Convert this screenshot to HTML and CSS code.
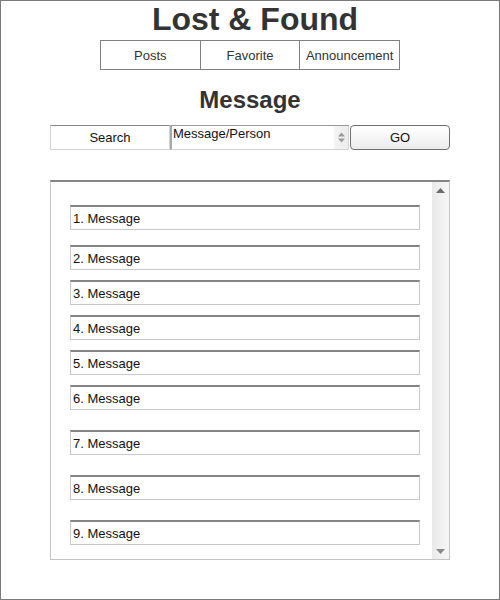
FILE: index.html
```html
<!DOCTYPE html>
<html>
<head>
<meta charset="utf-8">
<title>Lost &amp; Found</title>
<link rel="stylesheet" href="styles.css">
</head>
<body>
<div class="page">
  <h1 class="title">Lost &amp; Found</h1>
  <nav class="tabs">
    <a class="tab">Posts</a>
    <a class="tab">Favorite</a>
    <a class="tab">Announcement</a>
  </nav>
  <h2 class="heading">Message</h2>
  <div class="search-row">
    <div class="search-label">Search</div>
    <div class="select">
      <span class="select-text">Message/Person</span>
      <span class="select-arrows">
        <svg width="9" height="11" viewBox="0 0 9 11"><path d="M4.5 0.5 L8 4.5 L1 4.5 Z M1 6.5 L8 6.5 L4.5 10.5 Z" fill="#9a9a9a"/></svg>
      </span>
    </div>
    <div class="go">GO</div>
  </div>
  <div class="listbox">
    <div class="list">
      <div class="item">1. Message</div>
      <div class="item gap-l">2. Message</div>
      <div class="item gap-s">3. Message</div>
      <div class="item gap-s">4. Message</div>
      <div class="item gap-s">5. Message</div>
      <div class="item gap-s">6. Message</div>
      <div class="item gap-xl">7. Message</div>
      <div class="item gap-xl">8. Message</div>
      <div class="item gap-xl">9. Message</div>
    </div>
    <div class="scrollbar">
      <svg class="arrow" width="9" height="5" viewBox="0 0 9 5"><path d="M4.5 0 L9 5 L0 5 Z" fill="#6a6a6a"/></svg>
      <svg class="arrow" width="9" height="5" viewBox="0 0 9 5"><path d="M0 0 L9 0 L4.5 5 Z" fill="#8a8a8a"/></svg>
    </div>
  </div>
</div>
</body>
</html>
```

FILE: styles.css
```css
* { box-sizing: border-box; }
html, body { margin: 0; padding: 0; }
body {
  font-family: "Liberation Sans", Arial, sans-serif;
  color: #333;
  background: #fff;
}
.page {
  width: 500px;
  height: 600px;
  border: 1px solid #7a7a7a;
  display: flex;
  flex-direction: column;
  align-items: center;
}
.title {
  margin: 0;
  padding-left: 10px;
  font-size: 32px;
  line-height: 36px;
  font-weight: bold;
  color: #333;
}
.tabs {
  margin-top: 3px;
  width: 300px;
  height: 30px;
  display: flex;
  border: 1px solid #808080;
}
.tab {
  flex: 1;
  display: flex;
  align-items: center;
  justify-content: center;
  font-size: 13px;
  line-height: 15px;
  color: #333;
  border-right: 1px solid #808080;
}
.tab:last-child { border-right: none; }
.heading {
  margin: 16px 0 0;
  font-size: 24px;
  line-height: 28px;
  font-weight: bold;
  color: #333;
}
.search-row {
  margin-top: 11px;
  width: 400px;
  height: 25px;
  display: flex;
  font-size: 13px;
  line-height: 15px;
  color: #111;
}
.search-label {
  width: 120px;
  border: 1px solid #d4d4d4;
  border-top-color: #858585;
  display: flex;
  align-items: center;
  justify-content: center;
}
.select {
  width: 179px;
  border: 1px solid #d4d4d4;
  border-top-color: #9a9a9a;
  border-left: 2px solid #a8a8a8;
  display: flex;
  align-items: flex-start;
  padding-left: 1px;
}
.select-text { flex: 1; }
.select-arrows {
  align-self: stretch;
  width: 14px;
  display: flex;
  align-items: center;
  justify-content: center;
  background: linear-gradient(to right, #f4f4f4, #ececec);
}
.go {
  margin-left: 1px;
  width: 100px;
  border: 1px solid #707070;
  border-radius: 4px;
  background: linear-gradient(to bottom, #ffffff, #ececec);
  display: flex;
  align-items: center;
  justify-content: center;
}
.listbox {
  margin-top: 30px;
  width: 400px;
  height: 380px;
  display: flex;
  border: 1px solid #c4c4c4;
  border-top: 2px solid #858585;
}
.list {
  flex: 1;
  padding: 23px 12px 0 19px;
  display: flex;
  flex-direction: column;
}
.item {
  height: 25px;
  border: 1px solid #c8c8c8;
  border-top: 2px solid #858585;
  padding-left: 2px;
  font-size: 13px;
  line-height: 15px;
  color: #111;
  display: flex;
  align-items: center;
}
.gap-l { margin-top: 15px; }
.gap-s { margin-top: 10px; }
.gap-xl { margin-top: 20px; }
.scrollbar {
  width: 17px;
  background: linear-gradient(to right, #e9e9e9, #f7f7f7);
  display: flex;
  flex-direction: column;
  justify-content: space-between;
  align-items: center;
  padding: 6px 0 5px 0;
}
```
